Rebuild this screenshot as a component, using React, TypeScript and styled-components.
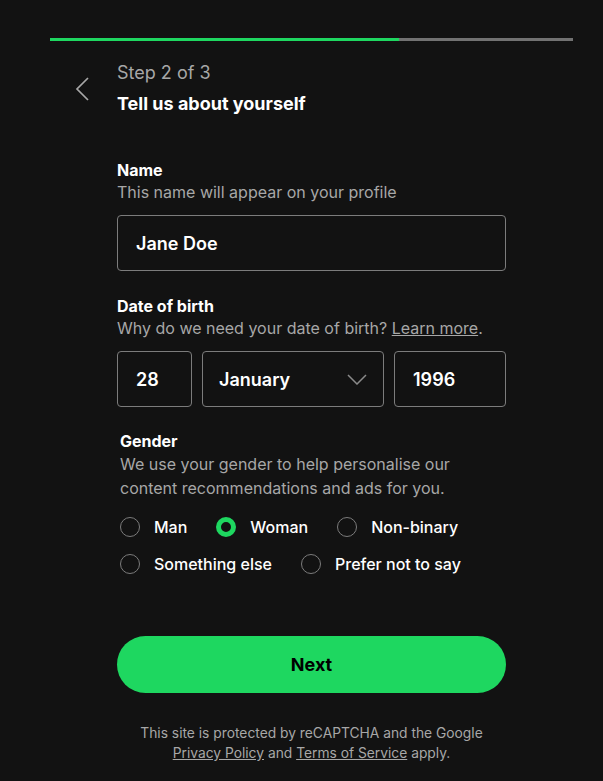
import React from "react";
import styled, { createGlobalStyle } from "styled-components";

const FONT = `Inter, "Noto Sans", "Liberation Sans", sans-serif`;

const Global = createGlobalStyle`
  html, body { margin: 0; padding: 0; background: #121212; }
  body { font-family: ${FONT}; color: #fff; -webkit-font-smoothing: antialiased; }
  * { box-sizing: border-box; }
`;

const Page = styled.div`
  width: 603px;
  min-height: 781px;
  background: #121212;
  padding-top: 38px;
`;

const Progress = styled.div`
  margin: 0 30px 0 50px;
  height: 3px;
  background: #727272;
  display: flex;
`;

const ProgressFill = styled.div`
  height: 100%;
  background: #1ed760;
`;

const Header = styled.header`
  display: flex;
  align-items: center;
  padding-left: 75px;
  margin-top: 20px;
  gap: 28px;
`;

const BackButton = styled.button`
  background: none;
  border: none;
  padding: 0;
  width: 14px;
  height: 24px;
  display: flex;
  align-items: center;
  justify-content: center;
  cursor: pointer;
  margin-top: 1px;
`;

const HeaderText = styled.div`
  display: flex;
  flex-direction: column;
  gap: 7px;
`;

const StepText = styled.div`
  font-size: 18px;
  line-height: 24px;
  color: #a7a7a7;
`;

const Title = styled.h1`
  margin: 0;
  font-size: 18px;
  line-height: 24px;
  font-weight: 700;
  color: #fff;
`;

const Form = styled.form`
  width: 389px;
  margin-left: 117px;
  display: flex;
  flex-direction: column;
`;

const Section = styled.div<{ $top: number; $indent?: number }>`
  margin-top: ${(p) => p.$top}px;
  padding-left: ${(p) => p.$indent ?? 0}px;
  display: flex;
  flex-direction: column;
`;

const Label = styled.label`
  font-size: 16px;
  line-height: 20px;
  font-weight: 700;
  color: #fff;
`;

const Help = styled.p<{ $lh?: number; $mt?: number }>`
  margin: ${(p) => p.$mt ?? 2}px 0 0;
  font-size: 16px;
  line-height: ${(p) => p.$lh ?? 20}px;
  color: #a7a7a7;
`;

const HelpLink = styled.a`
  color: #a7a7a7;
  text-decoration: underline;
`;

const Field = styled.div<{ $w?: number; $grow?: boolean; $pl?: number }>`
  height: 56px;
  border: 1px solid #7c7c7c;
  border-radius: 4px;
  display: flex;
  align-items: center;
  justify-content: space-between;
  padding: 0 16px 0 ${(p) => p.$pl ?? 18}px;
  font-size: 18px;
  font-weight: 600;
  color: #fff;
  width: ${(p) => (p.$w ? `${p.$w}px` : "auto")};
  flex: ${(p) => (p.$grow ? 1 : "none")};
`;

const InputRow = styled.div`
  margin-top: 13px;
  display: flex;
  gap: 10px;
`;

const RadioGroup = styled.div`
  margin-top: 15px;
  display: flex;
  flex-wrap: wrap;
  column-gap: 29px;
  row-gap: 13px;
  width: 380px;
`;

const Option = styled.label`
  display: flex;
  align-items: center;
  gap: 14px;
  height: 24px;
  font-size: 16px;
  font-weight: 500;
  color: #fff;
  cursor: pointer;
`;

const Circle = styled.span<{ $on?: boolean }>`
  width: 20px;
  height: 20px;
  border-radius: 50%;
  flex: none;
  border: ${(p) => (p.$on ? "5px solid #1ed760" : "1px solid #7c7c7c")};
  background: #121212;
`;

const NextButton = styled.button`
  margin-top: 60px;
  height: 57px;
  border: none;
  border-radius: 999px;
  background: #1ed760;
  color: #000;
  font-family: ${FONT};
  font-size: 18px;
  font-weight: 700;
  cursor: pointer;
`;

const Footer = styled.p`
  margin: 30px 0 0 117px;
  text-align: center;
  font-size: 13.8px;
  line-height: 20px;
  color: #a7a7a7;
  width: 389px;
`;

const FooterLink = styled.a`
  color: #a7a7a7;
  text-decoration: underline;
`;

const Chevron = () => (
  <svg width="14" height="24" viewBox="0 0 14 24" fill="none">
    <path d="M13 1 L2 12 L13 23" stroke="#a7a7a7" strokeWidth="1.7" />
  </svg>
);

const Caret = () => (
  <svg width="20" height="11" viewBox="0 0 20 11" fill="none">
    <path d="M1 1 L10 10 L19 1" stroke="#8a8a8a" strokeWidth="1.5" />
  </svg>
);

const options = [
  { label: "Man" },
  { label: "Woman", on: true },
  { label: "Non-binary" },
  { label: "Something else" },
  { label: "Prefer not to say" },
];

export default function App() {
  return (
    <Page>
      <Global />
      <Progress>
        <ProgressFill style={{ width: `${(2 / 3) * 100}%` }} />
      </Progress>
      <Header>
        <BackButton aria-label="Go back">
          <Chevron />
        </BackButton>
        <HeaderText>
          <StepText>Step 2 of 3</StepText>
          <Title>Tell us about yourself</Title>
        </HeaderText>
      </Header>
      <Form onSubmit={(e) => e.preventDefault()}>
        <Section $top={44}>
          <Label>Name</Label>
          <Help>This name will appear on your profile</Help>
          <InputRow>
            <Field $grow>Jane Doe</Field>
          </InputRow>
        </Section>
        <Section $top={25}>
          <Label>Date of birth</Label>
          <Help>
            Why do we need your date of birth? <HelpLink href="#">Learn more</HelpLink>.
          </Help>
          <InputRow>
            <Field $w={75}>28</Field>
            <Field $w={182} $pl={16}>
              January
              <Caret />
            </Field>
            <Field $grow>1996</Field>
          </InputRow>
        </Section>
        <Section $top={24} $indent={3}>
          <Label>Gender</Label>
          <Help $lh={24} $mt={1}>
            We use your gender to help personalise our
            <br />
            content recommendations and ads for you.
          </Help>
          <RadioGroup>
            {options.map((o) => (
              <Option key={o.label}>
                <Circle $on={o.on} />
                {o.label}
              </Option>
            ))}
          </RadioGroup>
        </Section>
        <NextButton type="submit">Next</NextButton>
      </Form>
      <Footer>
        This site is protected by reCAPTCHA and the Google
        <br />
        <FooterLink href="#">Privacy Policy</FooterLink> and{" "}
        <FooterLink href="#">Terms of Service</FooterLink> apply.
      </Footer>
    </Page>
  );
}
